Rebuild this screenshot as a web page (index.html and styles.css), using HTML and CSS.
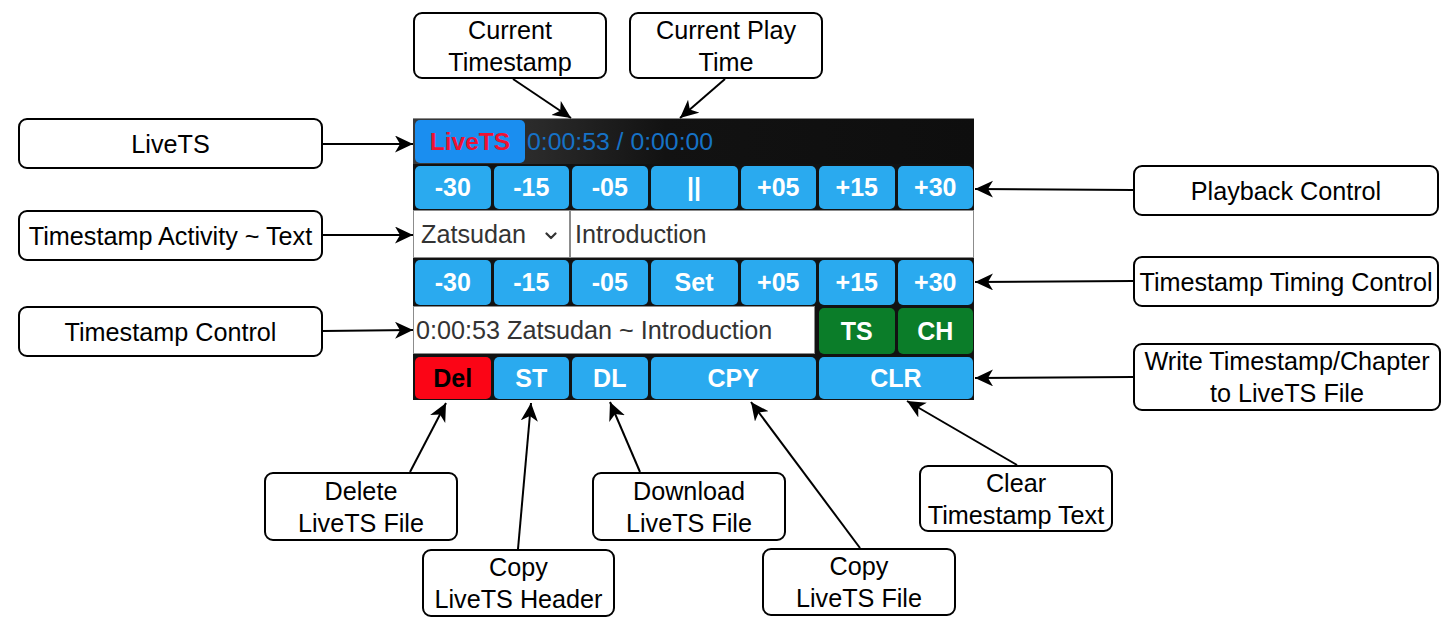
FILE: index.html
```html
<!DOCTYPE html>
<html lang="en">
<head>
<meta charset="utf-8">
<title>LiveTS diagram</title>
<link rel="stylesheet" href="styles.css">
</head>
<body>
<div class="canvas">
  <svg class="wires" width="1450" height="627" viewBox="0 0 1450 627">
    <defs>
      <marker id="ah" markerUnits="userSpaceOnUse" markerWidth="20" markerHeight="18" refX="18" refY="8.5" orient="auto">
        <path d="M0,0 L18,8.5 L0,17 L5,8.5 Z" fill="#000"/>
      </marker>
    </defs>
    <g stroke="#000" stroke-width="2" fill="none" marker-end="url(#ah)">
      <line x1="513" y1="79" x2="571" y2="118"/>
      <line x1="725" y1="79" x2="680" y2="118"/>
      <line x1="323" y1="144" x2="413" y2="144"/>
      <line x1="323" y1="235" x2="413" y2="235"/>
      <line x1="323" y1="331" x2="413" y2="330"/>
      <line x1="1133" y1="190" x2="975" y2="189"/>
      <line x1="1133" y1="281" x2="975" y2="282"/>
      <line x1="1133" y1="377" x2="975" y2="378"/>
      <line x1="410" y1="472" x2="446" y2="403"/>
      <line x1="518" y1="549" x2="531" y2="403"/>
      <line x1="640" y1="472" x2="610" y2="402"/>
      <line x1="860" y1="548" x2="751" y2="402"/>
      <line x1="1017" y1="465" x2="907" y2="401"/>
    </g>
  </svg>

  <div class="note n-curts">Current<br>Timestamp</div>
  <div class="note n-play">Current Play<br>Time</div>
  <div class="note n-livets">LiveTS</div>
  <div class="note n-activity">Timestamp Activity ~ Text</div>
  <div class="note n-tsctrl">Timestamp Control</div>
  <div class="note n-playback">Playback Control</div>
  <div class="note n-timing">Timestamp Timing Control</div>
  <div class="note n-write">Write Timestamp/Chapter<br>to LiveTS File</div>
  <div class="note n-delete">Delete<br>LiveTS File</div>
  <div class="note n-header">Copy<br>LiveTS Header</div>
  <div class="note n-download">Download<br>LiveTS File</div>
  <div class="note n-copyfile">Copy<br>LiveTS File</div>
  <div class="note n-clear">Clear<br>Timestamp Text</div>

  <div class="panel">
    <div class="head">
      <div class="brand">LiveTS</div>
      <div class="clock">0:00:53 / 0:00:00</div>
    </div>

    <div class="btn">-30</div>
    <div class="btn">-15</div>
    <div class="btn">-05</div>
    <div class="btn">||</div>
    <div class="btn">+05</div>
    <div class="btn">+15</div>
    <div class="btn">+30</div>

    <div class="field select span2">
      <span>Zatsudan</span>
      <svg class="chev" width="12" height="8" viewBox="0 0 12 8"><path d="M1.5 1.5 L6 6 L10.5 1.5" stroke="#333" stroke-width="2.2" fill="none" stroke-linecap="round" stroke-linejoin="round"/></svg>
    </div>
    <div class="field text span5">Introduction</div>

    <div class="btn">-30</div>
    <div class="btn">-15</div>
    <div class="btn">-05</div>
    <div class="btn">Set</div>
    <div class="btn">+05</div>
    <div class="btn">+15</div>
    <div class="btn">+30</div>

    <div class="field output span5">0:00:53 Zatsudan ~ Introduction</div>
    <div class="btn green">TS</div>
    <div class="btn green">CH</div>

    <div class="btn red">Del</div>
    <div class="btn">ST</div>
    <div class="btn">DL</div>
    <div class="btn span2">CPY</div>
    <div class="btn span2">CLR</div>
  </div>
</div>
</body>
</html>
```

FILE: styles.css
```css
* { box-sizing: border-box; }

html, body {
  margin: 0;
  padding: 0;
  background: #fff;
}

.canvas {
  position: relative;
  width: 1450px;
  height: 627px;
  overflow: hidden;
  background: #fff;
  font-family: "Liberation Sans", Arial, sans-serif;
}

.wires {
  position: absolute;
  left: 0;
  top: 0;
  z-index: 2;
  pointer-events: none;
}

/* callout boxes: nodes of a diagram */
.note {
  position: absolute;
  display: flex;
  align-items: center;
  justify-content: center;
  text-align: center;
  border: 2px solid #000;
  border-radius: 9px;
  background: #fff;
  color: #000;
  font-size: 25.2px;
  line-height: 32px;
  white-space: nowrap;
  z-index: 3;
}

.n-curts    { left: 413px;  top: 12px;  width: 194px; height: 67px; }
.n-play     { left: 629px;  top: 12px;  width: 194px; height: 67px; }
.n-livets   { left: 18px;   top: 118px; width: 305px; height: 51px; }
.n-activity { left: 18px;   top: 210px; width: 305px; height: 51px; }
.n-tsctrl   { left: 18px;   top: 306px; width: 305px; height: 51px; }
.n-playback { left: 1133px; top: 165px; width: 306px; height: 51px; }
.n-timing   { left: 1133px; top: 256px; width: 306px; height: 51px; }
.n-write    { left: 1133px; top: 343px; width: 308px; height: 68px; }
.n-delete   { left: 264px;  top: 472px; width: 194px; height: 69px; }
.n-header   { left: 422px;  top: 549px; width: 193px; height: 68px; }
.n-download { left: 592px;  top: 472px; width: 194px; height: 69px; }
.n-copyfile { left: 762px;  top: 548px; width: 194px; height: 68px; }
.n-clear    { left: 919px;  top: 465px; width: 194px; height: 67px; }

/* the UI mock */
.panel {
  position: absolute;
  left: 413px;
  top: 118px;
  width: 561px;
  height: 282px;
  background: #121212;
  display: grid;
  grid-template-columns: repeat(3, 1fr) 90px repeat(3, 1fr);
  grid-template-rows: 46px 46px 48px 48px 49px 45px;
  z-index: 1;
}

.head {
  grid-column: 1 / -1;
  display: flex;
  align-items: center;
  gap: 2px;
  padding: 1px 0 1px 2px;
  background: linear-gradient(90deg, #3a3a3a 0%, #2a2a2a 22%, #121212 45%, #0e0e0e 100%);
  border-top: 1px solid #8a8a8a;
}

.brand {
  width: 110px;
  height: 43px;
  display: flex;
  align-items: center;
  justify-content: center;
  background: #1a8ef0;
  border-radius: 5px;
  color: #ee1133;
  font-weight: bold;
  font-size: 24.5px;
}

.clock {
  color: #1672c6;
  font-size: 24.8px;
}

.btn {
  margin: 2px 1px 1px 2px;
  display: flex;
  align-items: center;
  justify-content: center;
  background: #2aaaef;
  border-radius: 5px;
  color: #fff;
  font-weight: bold;
  font-size: 25px;
}

.btn.green { background: #0b7d29; }
.btn.red   { background: #fb0516; color: #000; }

.span2 { grid-column: span 2; }
.span5 { grid-column: span 5; }

.field {
  background: #fff;
  border: 1px solid #8c8c8c;
  color: #333;
  font-size: 25.2px;
  display: flex;
  align-items: center;
}

.select {
  padding: 0 12px 0 7px;
  justify-content: space-between;
}

.chev { margin-top: 3px; }

.text { padding-left: 4px; }

.output {
  padding-left: 2px;
  margin: 0 2px 1px 0;
}
```
